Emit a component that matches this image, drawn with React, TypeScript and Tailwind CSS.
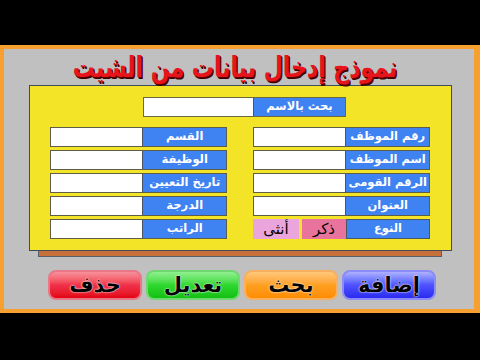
import React from "react";

const leftRows = ["القسم", "الوظيفة", "تاريخ التعيين", "الدرجة", "الراتب"];
const rightRows = ["رقم الموظف", "اسم الموظف", "الرقم القومى", "العنوان"];

const Field: React.FC<{ label: string }> = ({ label }) => (
  <div className="flex h-[20px] border border-[#5e5e48]">
    <div className="w-[92px] bg-white" />
    <div className="flex w-[84px] items-center justify-center whitespace-nowrap border-l border-[#4b5563] bg-[#3f82f2] text-[11.5px] font-bold text-white">
      {label}
    </div>
  </div>
);

const buttons = [
  { text: "حذف", cls: "bg-gradient-to-b from-[#f6909c] via-[#f0304a] to-[#e4000e] border-[#e87888]" },
  { text: "تعديل", cls: "bg-gradient-to-b from-[#8ef08e] via-[#2ed82e] to-[#10c010] border-[#70d870]" },
  { text: "بحث", cls: "bg-gradient-to-b from-[#ffc878] via-[#ffa020] to-[#ff8c00] border-[#f6b060]" },
  { text: "إضافة", cls: "bg-gradient-to-b from-[#b0b0ff] via-[#5050ff] to-[#2a2af0] border-[#8c8cf8]" },
];

export default function App() {
  return (
    <div className="h-[360px] w-[480px] bg-black pt-[45px] font-['DejaVu_Sans',sans-serif]">
      <div className="flex h-[268px] flex-col border-b-4 border-l-4 border-r-[6px] border-t-4 border-[#f7a030] bg-[#c0c0c0]">
        {/* title */}
        <div className="flex h-[36px] items-center justify-center pr-[8px] pt-[2px]">
          <span className="scale-y-[1.3] whitespace-nowrap text-[22px] font-bold leading-none text-[#e8141c] [text-shadow:1px_1px_0_#5a0000,1.5px_1.5px_0_#3a0000]">
            نموذج إدخال بيانات من الشيت
          </span>
        </div>

        {/* yellow sheet */}
        <div className="ml-[25px] h-[166px] w-[423px] border border-[#3e4c5c] bg-[#f4e428]">
          <div className="mt-[11px] ml-[113px] flex h-[20px] w-[203px] border border-[#6a6a40]">
            <div className="w-[109px] bg-white" />
            <div className="flex flex-1 items-center justify-center whitespace-nowrap border-l border-[#4b5563] bg-[#3f82f2] text-[11.5px] font-bold text-white">
              بحث بالاسم
            </div>
          </div>

          <div className="mt-[10px] flex gap-[26px] pl-[20px]">
            <div className="flex w-[177px] flex-col gap-[3px]">
              {leftRows.map((r) => (
                <Field key={r} label={r} />
              ))}
            </div>
            <div className="flex w-[177px] flex-col gap-[3px]">
              {rightRows.map((r) => (
                <Field key={r} label={r} />
              ))}
              <div className="flex h-[20px]">
                <div className="flex w-[46px] items-center justify-center bg-[#eaa6dc] text-[15px] text-black">
                  أنثى
                </div>
                <div className="w-[3px]" />
                <div className="flex w-[44px] items-center justify-center bg-[#e8739c] text-[15px] text-black">
                  ذكر
                </div>
                <div className="flex w-[84px] items-center justify-center border border-[#4b5563] bg-[#3f82f2] text-[11.5px] font-bold text-white">
                  النوع
                </div>
              </div>
            </div>
          </div>
        </div>
        <div className="ml-[34px] h-[6px] w-[404px] border border-t-0 border-[#55606a] bg-[#c8703a]" />

        {/* buttons */}
        <div className="mt-[13px] ml-[44px] flex gap-[4px]">
          {buttons.map((b) => (
            <div
              key={b.text}
              className={`flex h-[30px] w-[94px] items-center justify-center rounded-[8px] border-2 text-[21px] font-bold leading-none text-black [text-shadow:0_0_1px_#fff,0_0_2px_#fff] ${b.cls}`}
            >
              {b.text}
            </div>
          ))}
        </div>
      </div>
    </div>
  );
}
